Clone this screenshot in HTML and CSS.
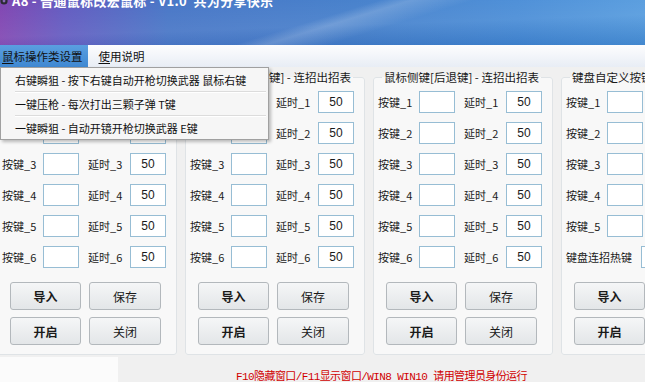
FILE: index.html
```html
<!DOCTYPE html>
<html lang="zh-CN">
<head>
    <meta charset="UTF-8">
    <title>A8 - 普通鼠标改宏鼠标</title>
    <link rel="stylesheet" href="styles.css">
</head>
<body>
    <div class="titlebar">
        <svg class="app-icon" width="10" height="10" viewBox="0 0 10 10">
            <circle cx="5" cy="5" r="3.6" fill="#2b2b33"/>
            <circle cx="5" cy="5" r="1.4" fill="#8a6ab8"/>
        </svg>
        <span class="title">A8 - 普通鼠标改宏鼠标 - V1.0 &nbsp;共为分享快乐</span>
    </div>

    <div class="menubar">
        <span class="menu-item active"><u>鼠</u>标操作类设置</span>
        <span class="menu-item"><u>使</u>用说明</span>
        <div class="dropdown">
            <div class="drop-item">右键瞬狙 - 按下右键自动开枪切换武器 鼠标右键</div>
            <div class="drop-sep"></div>
            <div class="drop-item">一键压枪 - 每次打出三颗子弹 T键</div>
            <div class="drop-sep"></div>
            <div class="drop-item">一键瞬狙 - 自动开镜开枪切换武器 E键</div>
        </div>
    </div>

    <div class="panels">
        <fieldset class="panel">
            <legend>鼠标中键 - 连招出招表</legend>
            <div class="rows">
                <div class="row"><span class="lbl">按键_1</span><span class="box"></span><span class="lbl lbl2">延时_1</span><span class="box">50</span></div>
                <div class="row"><span class="lbl">按键_2</span><span class="box"></span><span class="lbl lbl2">延时_2</span><span class="box">50</span></div>
                <div class="row"><span class="lbl">按键_3</span><span class="box"></span><span class="lbl lbl2">延时_3</span><span class="box">50</span></div>
                <div class="row"><span class="lbl">按键_4</span><span class="box"></span><span class="lbl lbl2">延时_4</span><span class="box">50</span></div>
                <div class="row"><span class="lbl">按键_5</span><span class="box"></span><span class="lbl lbl2">延时_5</span><span class="box">50</span></div>
                <div class="row"><span class="lbl">按键_6</span><span class="box"></span><span class="lbl lbl2">延时_6</span><span class="box">50</span></div>
            </div>
            <div class="buttons">
                <button class="btn strong">导入</button><button class="btn">保存</button>
                <button class="btn strong">开启</button><button class="btn">关闭</button>
            </div>
        </fieldset>

        <fieldset class="panel">
            <legend>鼠标侧键[前进键] - 连招出招表</legend>
            <div class="rows">
                <div class="row"><span class="lbl">按键_1</span><span class="box"></span><span class="lbl lbl2">延时_1</span><span class="box">50</span></div>
                <div class="row"><span class="lbl">按键_2</span><span class="box"></span><span class="lbl lbl2">延时_2</span><span class="box">50</span></div>
                <div class="row"><span class="lbl">按键_3</span><span class="box"></span><span class="lbl lbl2">延时_3</span><span class="box">50</span></div>
                <div class="row"><span class="lbl">按键_4</span><span class="box"></span><span class="lbl lbl2">延时_4</span><span class="box">50</span></div>
                <div class="row"><span class="lbl">按键_5</span><span class="box"></span><span class="lbl lbl2">延时_5</span><span class="box">50</span></div>
                <div class="row"><span class="lbl">按键_6</span><span class="box"></span><span class="lbl lbl2">延时_6</span><span class="box">50</span></div>
            </div>
            <div class="buttons">
                <button class="btn strong">导入</button><button class="btn">保存</button>
                <button class="btn strong">开启</button><button class="btn">关闭</button>
            </div>
        </fieldset>

        <fieldset class="panel">
            <legend>鼠标侧键[后退键] - 连招出招表</legend>
            <div class="rows">
                <div class="row"><span class="lbl">按键_1</span><span class="box"></span><span class="lbl lbl2">延时_1</span><span class="box">50</span></div>
                <div class="row"><span class="lbl">按键_2</span><span class="box"></span><span class="lbl lbl2">延时_2</span><span class="box">50</span></div>
                <div class="row"><span class="lbl">按键_3</span><span class="box"></span><span class="lbl lbl2">延时_3</span><span class="box">50</span></div>
                <div class="row"><span class="lbl">按键_4</span><span class="box"></span><span class="lbl lbl2">延时_4</span><span class="box">50</span></div>
                <div class="row"><span class="lbl">按键_5</span><span class="box"></span><span class="lbl lbl2">延时_5</span><span class="box">50</span></div>
                <div class="row"><span class="lbl">按键_6</span><span class="box"></span><span class="lbl lbl2">延时_6</span><span class="box">50</span></div>
            </div>
            <div class="buttons">
                <button class="btn strong">导入</button><button class="btn">保存</button>
                <button class="btn strong">开启</button><button class="btn">关闭</button>
            </div>
        </fieldset>

        <fieldset class="panel">
            <legend>键盘自定义按键 - 连招出招表</legend>
            <div class="rows">
                <div class="row"><span class="lbl">按键_1</span><span class="box"></span><span class="lbl lbl2">延时_1</span><span class="box">50</span></div>
                <div class="row"><span class="lbl">按键_2</span><span class="box"></span><span class="lbl lbl2">延时_2</span><span class="box">50</span></div>
                <div class="row"><span class="lbl">按键_3</span><span class="box"></span><span class="lbl lbl2">延时_3</span><span class="box">50</span></div>
                <div class="row"><span class="lbl">按键_4</span><span class="box"></span><span class="lbl lbl2">延时_4</span><span class="box">50</span></div>
                <div class="row"><span class="lbl">按键_5</span><span class="box"></span><span class="lbl lbl2">延时_5</span><span class="box">50</span></div>
                <div class="row"><span class="lbl lbl-wide">键盘连招热键</span><span class="box"></span></div>
            </div>
            <div class="buttons">
                <button class="btn strong">导入</button><button class="btn">保存</button>
                <button class="btn strong">开启</button><button class="btn">关闭</button>
            </div>
        </fieldset>
    </div>

    <div class="statusbar">
        <div class="status-left"></div>
        <div class="status-text">F10隐藏窗口/F11显示窗口/WIN8 WIN10 请用管理员身份运行</div>
    </div>
</body>
</html>
```

FILE: styles.css
```css
body {
    margin: 0;
    width: 645px;
    height: 382px;
    overflow: hidden;
    background-color: #f0f0f0;
    font-family: "Noto Sans CJK SC", "Liberation Sans", sans-serif;
    font-size: 12px;
    color: #1a1a1a;
}
.titlebar {
    height: 45px;
    display: flex;
    align-items: flex-start;
    overflow: hidden;
    background:
        linear-gradient(163deg, transparent 0%, transparent 48%, rgba(255,255,255,0.18) 52%, transparent 60%),
        linear-gradient(178deg, rgba(255,255,255,0.05) 0%, rgba(255,255,255,0.12) 55%, rgba(20,60,130,0.15) 100%),
        linear-gradient(90deg, #7a3cae 0%, #5a52bd 10%, #3d6ec3 26%, #3a78c8 55%, #3f86d4 80%, #4b95dc 100%);
}
.app-icon {
    margin-top: -4px;
    margin-left: -1px;
    flex: none;
}
.title {
    margin-left: 3px;
    margin-top: -6px;
    color: #ffffff;
    font-weight: bold;
    font-size: 13px;
    line-height: 14px;
    white-space: pre;
    letter-spacing: 0.3px;
}
.menubar {
    position: relative;
    height: 22px;
    display: flex;
    background: linear-gradient(#fdfdfe, #e8edf5);
    z-index: 5;
}
.menu-item {
    height: 22px;
    line-height: 22px;
    padding: 0 9px 0 2px;
    font-size: 11.5px;
    color: #111;
}
.menu-item u {
    text-decoration-thickness: 1px;
    text-underline-offset: 2px;
}
.menu-item.active {
    background: linear-gradient(#5a9fe0, #3f88d2);
    padding-right: 5px;
    margin-right: 9px;
}
.dropdown {
    position: absolute;
    left: 0;
    top: 22px;
    width: 267px;
    padding-top: 1px;
    background-color: #f6f6f6;
    border: 1px solid #a0a0a0;
    box-shadow: 2px 2px 3px rgba(0,0,0,0.25);
}
.drop-item {
    height: 22px;
    line-height: 22px;
    padding-left: 14px;
    font-size: 11px;
    color: #111;
}
.drop-sep {
    margin: 0 2px 0 14px;
    border-top: 1px solid #dcdcdc;
    border-bottom: 1px solid #ffffff;
}
.panels {
    display: flex;
    gap: 8px;
    margin-left: -3px;
    margin-top: 3px;
    height: 287px;
}
.panel {
    flex: none;
    box-sizing: border-box;
    width: 180px;
    height: 285px;
    margin: 0;
    padding: 7px 0 0 4px;
    border: 1px solid #dfe3e6;
    border-radius: 3px;
    background-color: #f8f8f8;
    min-width: 0;
}
.panel legend {
    margin-left: 4px;
    padding: 0 2px;
    font-size: 11.5px;
    line-height: 14px;
    color: #1a1a1a;
    white-space: nowrap;
}
.rows {
    display: flex;
    flex-direction: column;
    gap: 9px;
}
.row {
    display: flex;
    align-items: center;
    height: 22px;
    white-space: nowrap;
}
.lbl {
    width: 41px;
    font-size: 11px;
    line-height: 14px;
}
.lbl2 {
    width: 42px;
    margin-left: 9px;
}
.lbl-wide {
    width: 75px;
}
.box {
    box-sizing: border-box;
    width: 36px;
    height: 22px;
    border: 1px solid #97bdd4;
    background-color: #ffffff;
    text-align: center;
    line-height: 20px;
    font-family: "Liberation Sans", sans-serif;
    font-size: 12px;
}
.buttons {
    display: grid;
    grid-template-columns: 71px 72px;
    column-gap: 8px;
    row-gap: 7px;
    margin-top: 14px;
    padding-left: 8px;
}
.btn {
    height: 28px;
    padding: 0;
    border: 1px solid #b3b8bc;
    border-radius: 3px;
    background: linear-gradient(#f5f6f7, #e3e6e8);
    font-family: "Noto Sans CJK SC", sans-serif;
    font-size: 12px;
    color: #1a1a1a;
}
.btn.strong {
    font-weight: bold;
}
.statusbar {
    display: flex;
    height: 30px;
}
.status-left {
    width: 118px;
    background-color: #fbfbfb;
}
.status-text {
    flex: 1;
    text-align: center;
    padding-top: 14px;
    line-height: 13px;
    font-family: "Liberation Mono", "Noto Sans CJK SC", monospace;
    font-size: 11px;
    letter-spacing: -0.6px;
    color: #d10000;
    white-space: nowrap;
}
```
